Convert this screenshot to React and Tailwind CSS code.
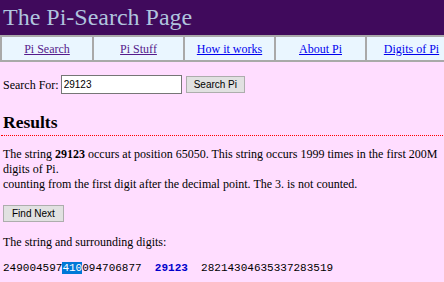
import React from "react"

const NAV = [
  { label: "Pi Search", visited: true },
  { label: "Pi Stuff", visited: true },
  { label: "How it works", visited: false },
  { label: "About Pi", visited: false },
  { label: "Digits of Pi", visited: false },
]

const btnFont = { fontFamily: '"Liberation Sans", Arial, sans-serif' }

export default function App() {
  return (
    <div className="min-h-screen w-full overflow-hidden bg-[#ffddff] text-[12px] text-black" style={{ fontFamily: '"Liberation Serif", "Times New Roman", serif' }}>
      {/* Header */}
      <div className="h-[35px] bg-[#400a5c] px-[3px] pt-[3px] text-[24px] leading-[28px] text-[#b0c4de]">
        The Pi-Search Page
      </div>

      {/* Nav */}
      <div className="flex w-[470px] border-y-2 border-[#a9a9a9] bg-[#eaf6ff]">
        {NAV.map((item, i) => (
          <div key={item.label} className={`flex h-[23px] shrink-0 items-center justify-center border-[#a9a9a9] ${i === 0 ? "w-[94px] border-x-2" : "w-[91px] border-r-2"}`}>
            <a href="#" className={`underline ${item.visited ? "text-[#551a8b]" : "text-[#0000ee]"}`}>{item.label}</a>
          </div>
        ))}
      </div>

      {/* Search form */}
      <div className="mt-[13px] flex items-center px-[3px]">
        <span>Search For:</span>
        <input
          defaultValue="29123"
          className="ml-[2px] h-[19px] w-[121px] border border-[#767676] bg-white px-[2px] text-[10px] outline-none"
          style={btnFont}
        />
        <button className="ml-[4px] h-[17px] border border-[#adadad] bg-[#e1e1e1] px-[7px] text-[10px] leading-[15px]" style={btnFont}>
          Search Pi
        </button>
      </div>

      {/* Results */}
      <h2 className="mx-[1px] mt-[18px] border-b border-dotted border-[#ff0000] px-[2px] pb-[3px] text-[17.5px] font-bold leading-[20px]">
        Results
      </h2>

      <p className="mt-[11px] px-[3px] leading-[15px]">
        The string <b>29123</b> occurs at position 65050. This string occurs 1999 times in the first 200M digits of Pi.
        <br />
        counting from the first digit after the decimal point. The 3. is not counted.
      </p>

      <button className="ml-[3px] mt-[13px] h-[17px] border border-[#adadad] bg-[#e1e1e1] px-[8px] text-[10px] leading-[15px]" style={btnFont}>
        Find Next
      </button>

      <p className="mt-[13px] px-[3px] leading-[15px]">The string and surrounding digits:</p>

      <div className="mt-[11px] whitespace-pre px-[3px] text-[11px] leading-[15px]" style={{ fontFamily: '"Liberation Mono", "Courier New", monospace' }}>
        249004597<span className="bg-[#0078d7] text-white">410</span>094706877  <b className="text-[#0000cc]">29123</b>  28214304635337283519
      </div>
    </div>
  )
}
